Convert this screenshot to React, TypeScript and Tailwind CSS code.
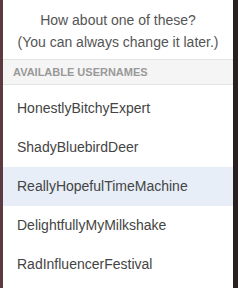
const names = [
  'HonestlyBitchyExpert',
  'ShadyBluebirdDeer',
  'ReallyHopefulTimeMachine',
  'DelightfullyMyMilkshake',
  'RadInfluencerFestival',
];

export default function App() {
  return (
    <div className="flex h-[288px] w-[238px] bg-[#2a2022] font-['Liberation_Sans',Arial,sans-serif]">
      <div className="w-[3px] bg-[#5b3a40]" />
      <div className="flex w-[230px] flex-col bg-white">
        <div className="pt-[9px] pb-[6px] text-center text-[14px] leading-[22px] text-[#555]">
          <p>How about one of these?</p>
          <p>(You can always change it later.)</p>
        </div>
        <div className="flex h-[26px] items-center border-y border-[#e3e3e3] bg-[#f5f5f5] pl-[10px] text-[11px] font-bold text-[#999]">
          AVAILABLE USERNAMES
        </div>
        <ul className="mt-[4px]">
          {names.map((n, i) => (
            <li
              key={n}
              className={`flex h-[39px] items-center pl-[14px] text-[14px] text-[#444] ${i === 2 ? 'bg-[#e7eef8]' : ''}`}
            >
              {n}
            </li>
          ))}
        </ul>
      </div>
    </div>
  );
}
